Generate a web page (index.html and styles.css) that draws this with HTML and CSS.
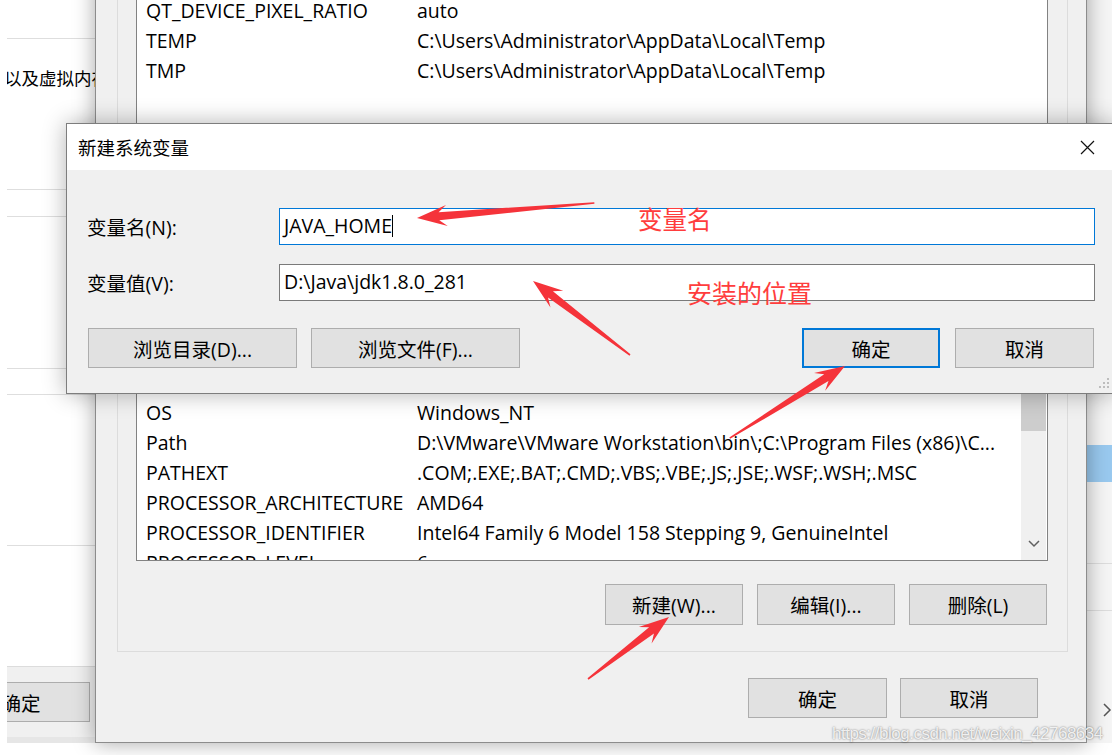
FILE: index.html
```html
<!DOCTYPE html>
<html lang="zh-CN">
<head>
    <meta charset="UTF-8">
    <title>新建系统变量</title>
    <link rel="stylesheet" href="styles.css">
</head>
<body>
    <div class="desk">
        <!-- 系统属性窗口（后面） -->
        <div class="win sysprop">
            <div class="sp-block sp-h39"></div>
            <div class="sp-block sp-h151"><p class="sp-text">以及虚拟内存</p></div>
            <div class="sp-block sp-h27"></div>
            <div class="sp-block sp-h152"></div>
            <div class="sp-block sp-h26"></div>
            <div class="sp-block sp-h151"></div>
            <div class="sp-fill"></div>
            <div class="sp-foot"><button class="btn sp-ok">确定</button></div>
        </div>

        <!-- 右侧另一个窗口 -->
        <div class="win side">
            <div class="side-sel"></div>
            <div class="side-line side-h81"></div>
            <div class="side-line side-h47"></div>
            <svg class="side-more" width="10" height="14" viewBox="0 0 10 14"><polyline points="2,1 8,7 2,13" fill="none" stroke="#555" stroke-width="1.5"/></svg>
        </div>

        <!-- 环境变量窗口 -->
        <div class="win envvars">
            <div class="group">
                <div class="varlist">
                    <div class="rows rows-top">
                        <div class="row"><span class="k">QT_DEVICE_PIXEL_RATIO</span><span class="v">auto</span></div>
                        <div class="row"><span class="k">TEMP</span><span class="v">C:\Users\Administrator\AppData\Local\Temp</span></div>
                        <div class="row"><span class="k">TMP</span><span class="v">C:\Users\Administrator\AppData\Local\Temp</span></div>
                    </div>
                    <div class="rows-low">
                        <div class="rows">
                            <div class="row"><span class="k">NUMBER_OF_PROCESSORS</span><span class="v">4</span></div>
                            <div class="row"><span class="k">OS</span><span class="v">Windows_NT</span></div>
                            <div class="row"><span class="k">Path</span><span class="v">D:\VMware\VMware Workstation\bin\;C:\Program Files (x86)\C...</span></div>
                            <div class="row"><span class="k">PATHEXT</span><span class="v">.COM;.EXE;.BAT;.CMD;.VBS;.VBE;.JS;.JSE;.WSF;.WSH;.MSC</span></div>
                            <div class="row"><span class="k">PROCESSOR_ARCHITECTURE</span><span class="v">AMD64</span></div>
                            <div class="row"><span class="k">PROCESSOR_IDENTIFIER</span><span class="v">Intel64 Family 6 Model 158 Stepping 9, GenuineIntel</span></div>
                            <div class="row"><span class="k">PROCESSOR_LEVEL</span><span class="v">6</span></div>
                        </div>
                        <div class="vscroll">
                            <div class="thumb"></div>
                            <svg class="down" width="12" height="8" viewBox="0 0 12 8"><polyline points="1,1 6,6 11,1" fill="none" stroke="#606060" stroke-width="1.5"/></svg>
                        </div>
                    </div>
                </div>
                <div class="btn-row group-actions">
                    <button class="btn">新建(W)...</button>
                    <button class="btn">编辑(I)...</button>
                    <button class="btn">删除(L)</button>
                </div>
            </div>
            <div class="btn-row env-actions">
                <button class="btn btn-ok">确定</button>
                <button class="btn">取消</button>
            </div>
        </div>

        <!-- 新建系统变量对话框 -->
        <div class="dlg">
            <div class="dlg-title">
                <span>新建系统变量</span>
                <svg class="dlg-close" width="15" height="15" viewBox="0 0 15 15">
                    <path d="M1 1 L14 14 M14 1 L1 14" stroke="#111" stroke-width="1.2" fill="none"/>
                </svg>
            </div>
            <div class="dlg-body">
                <div class="field">
                    <label>变量名(N):</label>
                    <div class="edit edit-focus">JAVA_HOME<span class="caret"></span></div>
                </div>
                <div class="field">
                    <label>变量值(V):</label>
                    <div class="edit">D:\Java\jdk1.8.0_281</div>
                </div>
                <div class="dlg-actions">
                    <div class="act-left">
                        <button class="btn btn-wide">浏览目录(D)...</button>
                        <button class="btn btn-wide">浏览文件(F)...</button>
                    </div>
                    <div class="act-right">
                        <button class="btn btn-default">确定</button>
                        <button class="btn btn-cancel">取消</button>
                    </div>
                </div>
                <svg class="grip" width="12" height="12" viewBox="0 0 12 12">
                    <g fill="#bdbdbd">
                        <rect x="9" y="1" width="2" height="2"/>
                        <rect x="5" y="5" width="2" height="2"/>
                        <rect x="9" y="5" width="2" height="2"/>
                        <rect x="1" y="9" width="2" height="2"/>
                        <rect x="5" y="9" width="2" height="2"/>
                        <rect x="9" y="9" width="2" height="2"/>
                    </g>
                </svg>
            </div>
        </div>

        <!-- 标注箭头 -->
        <svg class="marks" width="1112" height="755" viewBox="0 0 1112 755">
            <g fill="#f5333a">
                <polygon transform="translate(417 218) rotate(175.16)" points="-178,-0.8 -22,-4 -30,-10.5 0,0 -30,10.5 -22,4 -178,0.8"/>
                <polygon transform="translate(533 281) rotate(-142.66)" points="-122,-0.8 -22,-4 -30,-10.5 0,0 -30,10.5 -22,4 -122,0.8"/>
                <polygon transform="translate(845 366) rotate(-32.05)" points="-136,-0.8 -22,-4 -30,-10.5 0,0 -30,10.5 -22,4 -136,0.8"/>
                <polygon transform="translate(669 617) rotate(-37.43)" points="-102,-0.8 -22,-4 -30,-10.5 0,0 -30,10.5 -22,4 -102,0.8"/>
            </g>
        </svg>
        <span class="note note-name">变量名</span>
        <span class="note note-path">安装的位置</span>

        <span class="wm">https://blog.csdn.net/weixin_42768634</span>
    </div>
</body>
</html>
```

FILE: styles.css
```css
:root {
    --win-bg: #f0f0f0;
    --btn-bg: #e1e1e1;
    --btn-border: #adadad;
    --line: #dcdcdc;
    --accent: #0078d7;
    --mark-red: #ff3d3d;
}

* {
    margin: 0;
    padding: 0;
    box-sizing: border-box;
}

body {
    font-family: 'Open Sans', 'Noto Sans CJK SC', sans-serif;
    font-size: 19.5px;
    color: #000;
    background: #fff;
}

.desk {
    position: relative;
    width: 1112px;
    height: 755px;
    overflow: hidden;
    background: #fff;
}

.win {
    position: absolute;
}

.btn {
    font: inherit;
    color: #000;
    background: var(--btn-bg);
    border: 1px solid var(--btn-border);
    height: 40px;
    width: 138px;
    flex: none;
}

/* 系统属性 */
.sysprop {
    left: 7px;
    top: 0;
    width: 100px;
    height: 743px;
    background: #fff;
    overflow: hidden;
    display: flex;
    flex-direction: column;
    z-index: 1;
}

.sp-block {
    flex: none;
    border-bottom: 1px solid #dedede;
}

.sp-h39 { height: 39px; }
.sp-h151 { height: 151px; }
.sp-h27 { height: 27px; }
.sp-h152 { height: 152px; }
.sp-h26 { height: 26px; }

.sp-text {
    padding-top: 27px;
    font-size: 17.5px;
    line-height: 24px;
    white-space: nowrap;
    text-indent: -3px;
}

.sp-fill {
    flex: 1;
}

.sp-foot {
    height: 77px;
    background: var(--win-bg);
    border-top: 1px solid var(--line);
    border-bottom: 6px solid #e6e6e6;
    padding-top: 15px;
}

.sp-ok {
    margin-left: -55px;
}

/* 右边的窗口 */
.side {
    left: 1080px;
    top: 0;
    width: 40px;
    height: 743px;
    background: #f5f5f5;
    z-index: 1;
}

.side-sel {
    margin-top: 445px;
    height: 37px;
    background: #99c9ef;
}

.side-line {
    border-bottom: 1px solid #dddddd;
}

.side-h81 { height: 82px; }
.side-h47 { height: 47px; }

.side-more {
    display: block;
    margin: 92px 0 0 22px;
}

/* 环境变量 */
.envvars {
    left: 95px;
    top: -40px;
    width: 992px;
    height: 783px;
    background: var(--win-bg);
    border: 1px solid #8c8c8c;
    box-shadow: 0 0 20px rgba(0, 0, 0, 0.35);
    z-index: 2;
}

.group {
    margin: 9px 0 0 21px;
    width: 951px;
    border: 1px solid var(--line);
    padding: 14px 0 26px 18px;
}

.varlist {
    width: 912px;
    height: 576px;
    background: #fff;
    border: 1px solid #828282;
    overflow: hidden;
}

.rows-top {
    height: 381px;
    padding-top: 9px;
}

.row {
    display: flex;
    align-items: center;
    height: 30px;
    padding-left: 9px;
    white-space: nowrap;
}

.row .k {
    width: 271px;
    flex: none;
}

.rows-low {
    display: flex;
    height: 193px;
    overflow: hidden;
}

.rows-low .rows {
    flex: 1;
    overflow: hidden;
}

.vscroll {
    width: 25px;
    margin-right: 1px;
    background: var(--win-bg);
    display: flex;
    flex-direction: column;
    align-items: center;
}

.thumb {
    width: 100%;
    height: 64px;
    background: #cdcdcd;
}

.down {
    margin-top: auto;
    margin-bottom: 12px;
}

.btn-row {
    display: flex;
    justify-content: flex-end;
}

.group-actions {
    margin-top: 23px;
    padding-right: 20px;
    gap: 14px;
}

.group-actions .btn {
    height: 41px;
}

.env-actions {
    margin-top: 26px;
    padding-right: 48px;
    gap: 13px;
}

.env-actions .btn-ok {
    width: 139px;
}

/* 新建系统变量对话框 */
.dlg {
    position: absolute;
    left: 66px;
    top: 123px;
    width: 1049px;
    height: 271px;
    border: 1px solid #7d7d7d;
    box-shadow: 0 0 22px rgba(0, 0, 0, 0.3);
    z-index: 3;
    display: flex;
    flex-direction: column;
}

.dlg-title {
    height: 46px;
    flex: none;
    background: #fff;
    display: flex;
    align-items: center;
    justify-content: space-between;
    padding: 0 19px 0 11px;
    font-size: 18.5px;
}

.dlg-body {
    position: relative;
    flex: 1;
    background: var(--win-bg);
    padding: 38px 18px 25px 20px;
}

.field {
    display: flex;
    align-items: center;
    height: 37px;
    margin-bottom: 19px;
}

.field label {
    width: 192px;
    flex: none;
}

.edit {
    width: 816px;
    height: 37px;
    background: #fff;
    border: 1px solid #7a7a7a;
    padding: 0 4px;
    line-height: 34px;
    white-space: nowrap;
}

.edit-focus {
    border-color: var(--accent);
}

.caret {
    display: inline-block;
    width: 1px;
    height: 22px;
    background: #000;
    vertical-align: -4px;
}

/* 与上一行的 margin 会合并，所以直接写总间距 */
.dlg-actions {
    display: flex;
    justify-content: space-between;
    margin-top: 27px;
}

.act-left {
    display: flex;
    gap: 14px;
    margin-left: 1px;
}

.btn-wide {
    width: 209px;
}

.act-right {
    display: flex;
    gap: 15px;
    margin-right: 2px;
}

.btn-default {
    border: 2px solid var(--accent);
}

.btn-cancel {
    width: 139px;
}

.grip {
    position: absolute;
    right: 4px;
    bottom: 4px;
}

/* 标注 */
.marks {
    position: absolute;
    left: 0;
    top: 0;
    z-index: 4;
    pointer-events: none;
}

.note {
    position: absolute;
    z-index: 5;
    color: var(--mark-red);
    font-family: 'Noto Sans CJK SC', sans-serif;
    line-height: 1;
    white-space: nowrap;
}

.note-name {
    left: 638px;
    top: 207px;
    font-size: 24.5px;
}

.note-path {
    left: 687px;
    top: 280px;
    font-size: 25px;
}

.wm {
    position: absolute;
    left: 832px;
    top: 724px;
    z-index: 6;
    font-family: 'Liberation Sans', sans-serif;
    font-size: 17px;
    letter-spacing: -0.5px;
    color: rgba(255, 255, 255, 0.85);
    text-shadow: 0 0 2px rgba(0, 0, 0, 0.55);
    white-space: nowrap;
}
```
